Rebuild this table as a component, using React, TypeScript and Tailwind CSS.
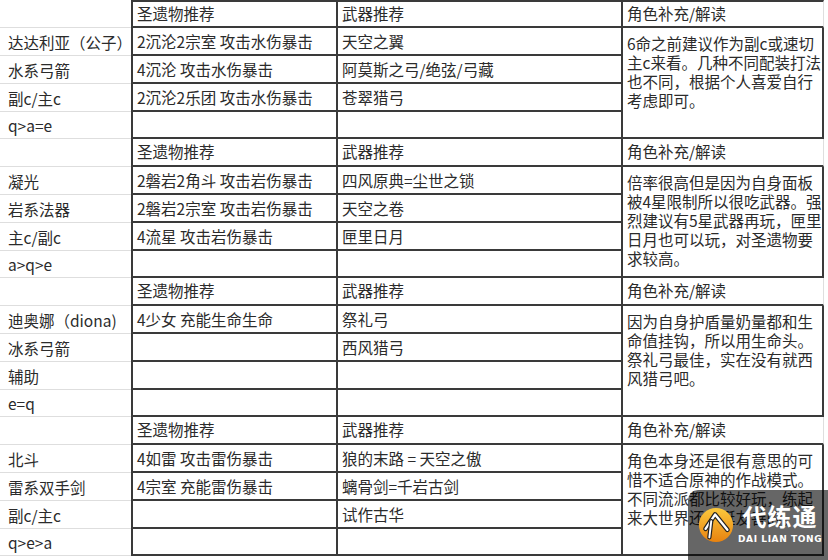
import React from "react";

type Section = {
  name: string[];
  art: string[];
  wep: string[];
  notes: string[];
};

const sections: Section[] = [
  {
    name: ["达达利亚（公子）", "水系弓箭", "副c/主c", "q>a=e"],
    art: ["2沉沦2宗室 攻击水伤暴击", "4沉沦 攻击水伤暴击", "2沉沦2乐团 攻击水伤暴击", ""],
    wep: ["天空之翼", "阿莫斯之弓/绝弦/弓藏", "苍翠猎弓", ""],
    notes: ["6命之前建议作为副c或速切", "主c来看。几种不同配装打法", "也不同，根据个人喜爱自行", "考虑即可。"],
  },
  {
    name: ["凝光", "岩系法器", "主c/副c", "a>q>e"],
    art: ["2磐岩2角斗 攻击岩伤暴击", "2磐岩2宗室 攻击岩伤暴击", "4流星 攻击岩伤暴击", ""],
    wep: ["四风原典=尘世之锁", "天空之卷", "匣里日月", ""],
    notes: ["倍率很高但是因为自身面板", "被4星限制所以很吃武器。强", "烈建议有5星武器再玩，匣里", "日月也可以玩，对圣遗物要", "求较高。"],
  },
  {
    name: ["迪奥娜（diona)", "冰系弓箭", "辅助", "e=q"],
    art: ["4少女 充能生命生命", "", "", ""],
    wep: ["祭礼弓", "西风猎弓", "", ""],
    notes: ["因为自身护盾量奶量都和生", "命值挂钩，所以用生命头。", "祭礼弓最佳，实在没有就西", "风猎弓吧。"],
  },
  {
    name: ["北斗", "雷系双手剑", "副c/主c", "q>e>a"],
    art: ["4如雷 攻击雷伤暴击", "4宗室 充能雷伤暴击", "", ""],
    wep: ["狼的末路 = 天空之傲", "螭骨剑=千岩古剑", "试作古华", ""],
    notes: ["角色本身还是很有意思的可", "惜不适合原神的作战模式。", "不同流派都比较好玩，练起", "来大世界还是挺友善的。"],
  },
];

function Block({ s, first }: { s: Section; first: boolean }) {
  const top = first ? "border-t-2" : "";
  return (
    <div className="grid grid-cols-[131px_205px_285px_203px] grid-rows-[28px_28px_28px_28px_27px]">
      <div className="border-b border-[#dedede]" />
      <div className={`flex items-center pl-1 border-l-2 border-b-2 border-[#3a3a3a] ${top}`}>圣遗物推荐</div>
      <div className={`flex items-center pl-1 border-l-2 border-b-2 border-[#3a3a3a] ${top}`}>武器推荐</div>
      <div className={`flex items-center pl-1 border-l-2 border-b-2 border-[#3a3a3a] border-r border-r-[#dedede] ${top}`}>
        角色补充/解读
      </div>
      {s.name.map((n, i) => (
        <React.Fragment key={i}>
          <div className="flex items-center pl-2 pt-[2px] border-b border-[#dedede] whitespace-nowrap">{n}</div>
          <div className="flex items-center pl-1 pt-[2px] border-l-2 border-b-2 border-[#3a3a3a] whitespace-nowrap">{s.art[i]}</div>
          <div className="flex items-center pl-1 pt-[2px] border-l-2 border-b-2 border-[#3a3a3a] whitespace-nowrap">{s.wep[i]}</div>
          {i === 0 && (
            <div className="row-span-4 pl-1 pt-[6px] leading-[19px] border-l-2 border-r-2 border-b-2 border-[#3a3a3a]">
              {s.notes.map((l, j) => (
                <div key={j} className="whitespace-nowrap">{l}</div>
              ))}
            </div>
          )}
        </React.Fragment>
      ))}
    </div>
  );
}

function Logo() {
  return (
    <svg width="38" height="38" viewBox="0 0 40 40">
      <defs>
        <linearGradient id="lg" x1="0" y1="0" x2="0" y2="1">
          <stop offset="0" stopColor="#fbc93d" />
          <stop offset="1" stopColor="#e8820f" />
        </linearGradient>
      </defs>
      <circle cx="20" cy="20" r="18" fill="url(#lg)" />
      <path d="M9 24 L19 9 L32 25" fill="none" stroke="#222" strokeWidth="5" strokeLinejoin="round" strokeLinecap="round" />
      <path d="M9 24 L19 9 L32 25" fill="none" stroke="#fff" strokeWidth="2.5" strokeLinejoin="round" strokeLinecap="round" />
      <path d="M15 16 L13 33" fill="none" stroke="#222" strokeWidth="4.5" strokeLinecap="round" />
      <path d="M15 16 L13 33" fill="none" stroke="#fff" strokeWidth="2" strokeLinecap="round" />
    </svg>
  );
}

export default function App() {
  return (
    <div
      className="relative w-[828px] h-[560px] bg-white text-[#2b2b2b] text-[15.5px] overflow-hidden"
      style={{ fontFamily: '"Noto Sans CJK SC", "Noto Sans", sans-serif' }}
    >
      {sections.map((s, i) => (
        <Block key={i} s={s} first={i === 0} />
      ))}
      <div className="absolute right-0 bottom-0 w-[140px] h-[70px] rounded-tl-[10px] bg-black/60 flex items-center pl-[9px] gap-[3px]">
        <Logo />
        <div className="flex flex-col items-center pb-[2px]">
          <span className="text-white text-[24px] font-bold leading-none tracking-[1px]">代练通</span>
          <span className="text-white text-[9px] font-bold leading-none mt-[7px] tracking-[0.6px]" style={{ fontFamily: '"DejaVu Sans", sans-serif' }}>
            DAI LIAN TONG
          </span>
        </div>
      </div>
    </div>
  );
}
